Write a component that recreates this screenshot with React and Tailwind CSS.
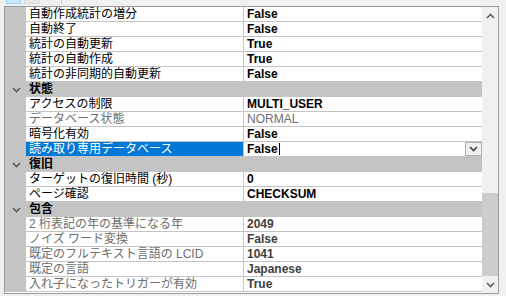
import React from "react";

const rows = [
  { name: "自動作成統計の増分", value: "False" },
  { name: "自動終了", value: "False" },
  { name: "統計の自動更新", value: "True" },
  { name: "統計の自動作成", value: "True" },
  { name: "統計の非同期的自動更新", value: "False" },
  { cat: "状態" },
  { name: "アクセスの制限", value: "MULTI_USER" },
  { name: "データベース状態", value: "NORMAL", gray: true, plain: true },
  { name: "暗号化有効", value: "False" },
  { name: "読み取り専用データベース", value: "False", selected: true },
  { cat: "復旧" },
  { name: "ターゲットの復旧時間 (秒)", value: "0" },
  { name: "ページ確認", value: "CHECKSUM" },
  { cat: "包含" },
  { name: "2 桁表記の年の基準になる年", value: "2049", gray: true },
  { name: "ノイズ ワード変換", value: "False", gray: true },
  { name: "既定のフルテキスト言語の LCID", value: "1041", gray: true },
  { name: "既定の言語", value: "Japanese", gray: true },
  { name: "入れ子になったトリガーが有効", value: "True", gray: true },
];

function Chevron({ up, className }) {
  return (
    <svg width="9" height="6" viewBox="0 0 9 6" className={className}>
      <path
        d={up ? "M1 5 L4.5 1.5 L8 5" : "M1 1 L4.5 4.5 L8 1"}
        fill="none"
        stroke="currentColor"
        strokeWidth="1.6"
      />
    </svg>
  );
}

function Row({ r }) {
  if (r.cat) {
    return (
      <div className="flex h-[15px] bg-[#c4c4c4]">
        <div className="w-[21px] flex items-center justify-center pl-[1px]">
          <Chevron className="text-[#5a5a5a]" />
        </div>
        <div className="pl-[3px] font-bold text-black text-[12px] leading-[15px]">{r.cat}</div>
      </div>
    );
  }
  const nameCls = r.selected
    ? "bg-[#0078d7] text-white"
    : r.gray
    ? "bg-white text-[#6d6d6d]"
    : "bg-white text-black";
  const valCls = r.plain
    ? "text-[#6d6d6d] font-normal"
    : r.gray
    ? "text-[#404040] font-bold"
    : "text-black font-bold";
  return (
    <div className="flex h-[15px]">
      <div className="w-[21px] bg-[#c4c4c4]" />
      <div
        className={`w-[218px] border-r border-b border-[#c4c4c4] pl-[3px] text-[12px] leading-[14px] whitespace-nowrap overflow-hidden ${nameCls}`}
      >
        {r.name}
      </div>
      <div className="relative flex-1 border-b border-[#c4c4c4] bg-white pl-[3px] flex items-center">
        <span className={`text-[12px] leading-[14px] ${valCls}`}>{r.value}</span>
        {r.selected && (
          <>
            <span className="w-px h-[12px] bg-black ml-[1px]" />
            <div className="absolute right-0 top-0 w-[17px] h-[14px] border border-[#adadad] bg-[#f0f0f0] flex items-center justify-center">
              <Chevron className="text-[#404040]" />
            </div>
          </>
        )}
      </div>
    </div>
  );
}

export default function App() {
  return (
    <div
      className="w-[506px] h-[296px] bg-[#f0f0f0] overflow-hidden"
      style={{ fontFamily: '"Liberation Sans", "Noto Sans CJK JP", sans-serif' }}
    >
      <div className="h-[6px] flex items-start pl-[6px] gap-[3px]">
        <div className="w-[15px] h-[4px] bg-[#cce8ff] border-x border-b border-[#99d1ff]" />
        <div className="w-[16px] h-[4px] bg-[#e6e6e6] border-x border-b border-[#d9d9d9]" />
        <div className="w-px h-[4px] bg-[#c8c8c8] ml-[18px]" />
      </div>
      <div className="ml-[4px] w-[495px] h-[288px] border border-[#9a9a9a] flex bg-white">
        <div className="w-[477px] flex flex-col">
          {rows.map((r, i) => (
            <Row key={i} r={r} />
          ))}
        </div>
        <div className="w-[16px] bg-[#f0f0f0] flex flex-col">
          <div className="h-[17px] flex items-center justify-center text-[#606060]">
            <Chevron up />
          </div>
          <div className="h-[169px]" />
          <div className="h-[83px] mx-[0px] bg-[#cdcdcd]" />
          <div className="flex-1 flex items-center justify-center text-[#606060]">
            <Chevron />
          </div>
        </div>
      </div>
    </div>
  );
}
